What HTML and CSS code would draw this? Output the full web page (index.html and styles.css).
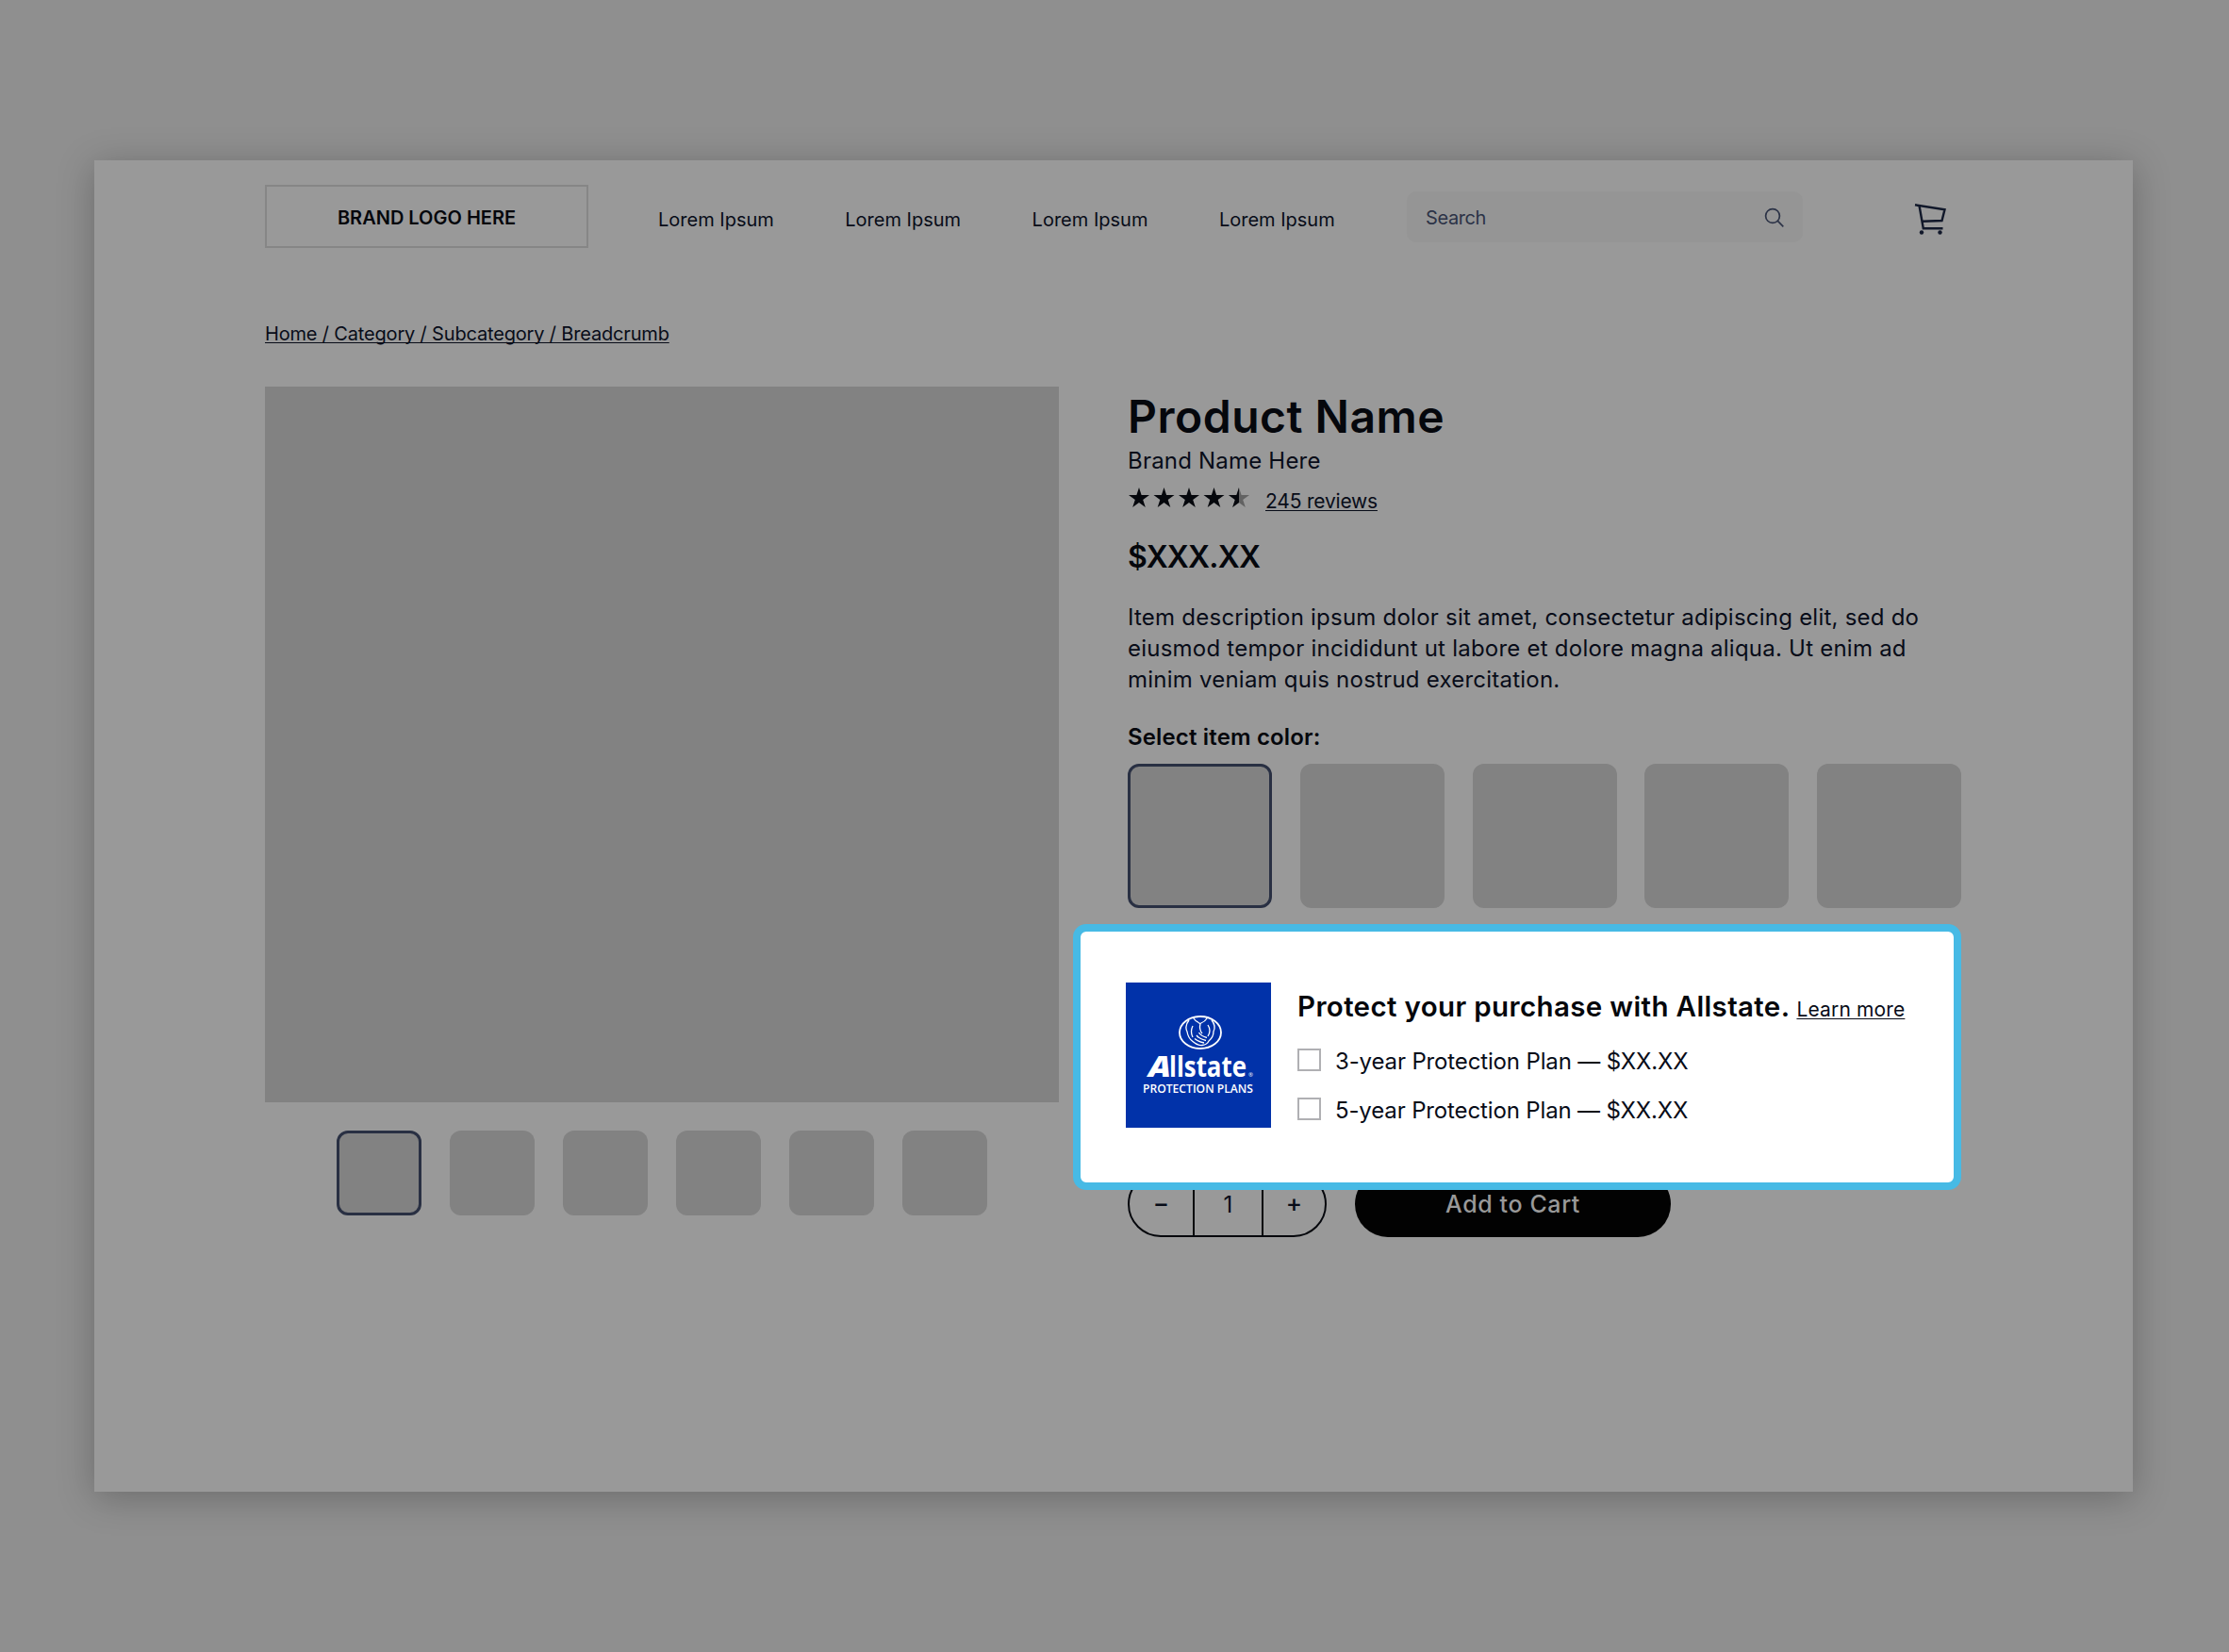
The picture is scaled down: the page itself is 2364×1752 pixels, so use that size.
FILE: index.html
```html
<!DOCTYPE html>
<html lang="en">
<head>
    <meta charset="utf-8">
    <title>Product Name</title>
    <link rel="stylesheet" href="styles.css">
</head>
<body>
    <div class="page">
        <header class="header">
            <div class="logo">BRAND LOGO HERE</div>
            <nav class="nav">
                <a>Lorem Ipsum</a>
                <a>Lorem Ipsum</a>
                <a>Lorem Ipsum</a>
                <a>Lorem Ipsum</a>
            </nav>
            <div class="search">
                <span>Search</span>
                <svg width="22" height="22" viewBox="0 0 22 22" fill="none" stroke="#2c3347" stroke-width="1.7">
                    <circle cx="9" cy="9" r="7.4"/>
                    <path d="M14.2 14.2L20.3 20.3"/>
                </svg>
            </div>
            <svg class="cart" width="36" height="34" viewBox="0 0 36 34" fill="none" stroke="#11182a" stroke-width="2.4">
                <path d="M1 2.3L32.500 7.2L29.500 19L9 19.700"/>
                <path d="M5.500 3L9.800 27.200H30.500"/>
                <circle cx="8" cy="31.500" r="2.200" fill="#11182a" stroke="none"/>
                <circle cx="27.500" cy="31.500" r="2.200" fill="#11182a" stroke="none"/>
            </svg>
        </header>

        <div class="breadcrumb"><a>Home / Category / Subcategory / Breadcrumb</a></div>

        <main class="product">
            <section class="gallery">
                <div class="photo"></div>
                <div class="thumbs">
                    <div class="tile selected"></div>
                    <div class="tile"></div>
                    <div class="tile"></div>
                    <div class="tile"></div>
                    <div class="tile"></div>
                    <div class="tile"></div>
                </div>
            </section>

            <section class="details">
                <h1>Product Name</h1>
                <div class="brand">Brand Name Here</div>
                <div class="rating">
                    <svg width="128" height="22" viewBox="0 0 128 22" fill="#05070c">
                        <defs>
                            <path id="star" d="M11 0L13.6 8H22L15.2 12.9L17.8 21L11 16L4.2 21L6.8 12.9L0 8H8.4Z"/>
                            <clipPath id="half"><rect width="11" height="22"/></clipPath>
                        </defs>
                        <use href="#star"/>
                        <use href="#star" x="26.5"/>
                        <use href="#star" x="53"/>
                        <use href="#star" x="79.5"/>
                        <use href="#star" x="106" fill="#626262"/>
                        <use href="#star" transform="translate(106 0)" clip-path="url(#half)"/>
                    </svg>
                    <a>245 reviews</a>
                </div>
                <div class="price">$XXX.XX</div>
                <p class="description">Item description ipsum dolor sit amet, consectetur adipiscing elit, sed do<br>
                eiusmod tempor incididunt ut labore et dolore magna aliqua. Ut enim ad<br>
                minim veniam quis nostrud exercitation.</p>
                <div class="label">Select item color:</div>
                <div class="swatches">
                    <div class="tile selected"></div>
                    <div class="tile"></div>
                    <div class="tile"></div>
                    <div class="tile"></div>
                    <div class="tile"></div>
                </div>
                <div class="actions">
                    <div class="quantity">
                        <span class="step">−</span>
                        <span>1</span>
                        <span class="step">+</span>
                    </div>
                    <div class="add">Add to Cart</div>
                </div>
            </section>
        </main>

        <!-- protection plan offer, sits over the dimmed page -->
        <aside class="offer">
            <svg class="allstate" width="154" height="154" viewBox="0 0 154 154" fill="#fff">
                <rect width="154" height="154" fill="#0132a9"/>
                <g fill="none" stroke="#fff" stroke-width="1.3">
                    <ellipse cx="79" cy="53" rx="22" ry="17" stroke-width="1.8"/>
                    <path d="M71.500 37.500Q74 41.500 79 43.500Q84 41.500 86.500 37.500"/>
                    <path d="M79 43.500Q77.500 50 81 54"/>
                    <path d="M67 40Q62 46 65 52Q66 59 71 62.500Q76 67 81 66.500"/>
                    <path d="M91 40Q96 46 93 52Q93 58 88 62Q86 66 81 66.500"/>
                    <path d="M71 46Q68 52 71 58"/>
                    <path d="M87 45Q91 51 87 57"/>
                    <path d="M77.500 53Q80 57 86 58.500M75 56Q78 60 85 61.500M73 59.500Q77 63 83 64"/>
                </g>
                <text class="wordmark slanted" x="24" y="99.500" textLength="24" lengthAdjust="spacingAndGlyphs">A</text>
                <text class="wordmark" x="46" y="99.500" textLength="82" lengthAdjust="spacingAndGlyphs">llstate</text>
                <text class="reg" x="130" y="99.500">®</text>
                <text class="plans" x="18" y="117.300" textLength="117" lengthAdjust="spacingAndGlyphs">PROTECTION PLANS</text>
            </svg>
            <div class="offer-body">
                <div class="offer-title"><strong>Protect your purchase with Allstate.</strong><a>Learn more</a></div>
                <div class="plan"><i class="box"></i><span>3-year Protection Plan — $XX.XX</span></div>
                <div class="plan"><i class="box"></i><span>5-year Protection Plan — $XX.XX</span></div>
            </div>
        </aside>
    </div>
</body>
</html>
```
FILE: styles.css
```css
html, body {
    margin: 0;
    padding: 0;
}

body {
    width: 2364px;
    height: 1752px;
    overflow: hidden;
    background: #8f8f8f;
    font-family: Inter, "Liberation Sans", sans-serif;
    font-size: 24px;
    color: #080c18;
}

.page {
    position: relative;
    box-sizing: border-box;
    width: 2162px;
    height: 1412px;
    margin: 170px 0 0 100px;
    padding: 26px 182px 0 181px;
    background: #999;
    box-shadow: 0 6px 36px rgba(0, 0, 0, 0.25);
}

.header {
    display: flex;
    align-items: center;
    height: 67px;
}

.logo {
    box-sizing: border-box;
    width: 343px;
    height: 67px;
    padding-top: 2px;
    border: 2px solid #868686;
    font-size: 20px;
    font-weight: 600;
    line-height: 62px;
    text-align: center;
    color: #05070c;
}

.nav {
    display: flex;
    width: 794px;
    margin-left: 74px;
    padding-top: 6px;
    font-size: 20px;
}

.nav a {
    width: 198.300px;
    white-space: nowrap;
}

.search {
    box-sizing: border-box;
    display: flex;
    align-items: center;
    justify-content: space-between;
    width: 420px;
    height: 54px;
    padding: 3px 19px 0 20px;
    border-radius: 10px;
    background: #959595;
    font-size: 20px;
    letter-spacing: -0.4px;
    color: #2c3347;
}

.cart {
    margin-left: 118px;
    padding-top: 4px;
}

.breadcrumb {
    margin-top: 76px;
    height: 71px;
    font-size: 20px;
    letter-spacing: -0.17px;
    line-height: 31px;
}

.breadcrumb a,
.rating a,
.offer-title a {
    text-decoration: underline;
    text-decoration-thickness: 1px;
    text-underline-offset: 2px;
    text-decoration-skip-ink: none;
}

.product {
    display: flex;
    gap: 73px;
}

.gallery {
    width: 842px;
}

.photo {
    height: 759px;
    background: #828282;
}

.thumbs {
    display: flex;
    justify-content: center;
    gap: 30.200px;
    margin-top: 30px;
}

.tile {
    box-sizing: border-box;
    border-radius: 12px;
    background: #828282;
}

.tile.selected {
    border: 3px solid #293043;
}

.thumbs .tile {
    width: 90px;
    height: 90px;
}

.details {
    width: 884px;
}

h1 {
    margin: 0;
    font-size: 48px;
    font-weight: 600;
    letter-spacing: 0.5px;
    line-height: 63px;
    color: #05070c;
}

.brand {
    letter-spacing: 0.2px;
    line-height: 32px;
}

.rating {
    display: flex;
    align-items: center;
    gap: 17px;
    height: 46px;
    padding-left: 1px;
}

.rating a {
    padding-top: 7px;
    font-size: 21px;
    letter-spacing: -0.2px;
}

.price {
    margin-top: 18px;
    font-size: 32px;
    font-weight: 600;
    letter-spacing: -0.8px;
    line-height: 43px;
    color: #05070c;
}

.description {
    margin: 26px 0 30px;
    letter-spacing: 0.230px;
    line-height: 33px;
    white-space: nowrap;
}

.label {
    font-weight: 600;
    letter-spacing: 0.15px;
    line-height: 30px;
    color: #05070c;
}

.swatches {
    display: flex;
    justify-content: space-between;
    margin-top: 13px;
}

.swatches .tile {
    width: 153px;
    height: 153px;
}

.actions {
    display: flex;
    gap: 30px;
    margin-top: 279px;
    text-align: center;
}

.quantity {
    box-sizing: border-box;
    display: grid;
    grid-template-columns: 67px 73px 67px;
    width: 211px;
    height: 70px;
    border: 2px solid #05070c;
    border-radius: 35px;
    line-height: 67px;
}

.quantity span {
    height: 66px;
}

.quantity span + span {
    border-left: 2px solid #05070c;
}

.quantity .step {
    font-size: 26px;
    font-weight: 500;
    line-height: 64px;
}

.add {
    width: 335px;
    height: 70px;
    border-radius: 35px;
    background: #020202;
    font-size: 25px;
    font-weight: 500;
    letter-spacing: 0.6px;
    line-height: 70px;
    color: #999;
}

.offer {
    position: absolute;
    left: 1038px;
    top: 810px;
    box-sizing: border-box;
    display: flex;
    gap: 28px;
    width: 942px;
    height: 282px;
    padding: 54px 48px;
    border: 8px solid #47bae5;
    border-radius: 14px;
    background: #fff;
    white-space: nowrap;
}

.wordmark {
    font: bold 30px "Open Sans", sans-serif;
}

.slanted {
    font-style: italic;
    font-weight: 800;
}

.reg {
    font: 6px "Open Sans", sans-serif;
}

.plans {
    font: 600 13px "Open Sans", sans-serif;
}

.offer-body {
    padding-top: 5px;
}

.offer-title {
    display: flex;
    align-items: baseline;
    gap: 7px;
    height: 52px;
    line-height: 41px;
}

.offer-title strong {
    font-size: 29.500px;
    font-weight: 600;
    letter-spacing: 0.36px;
    color: #05070c;
}

.offer-title a {
    font-size: 21px;
    letter-spacing: 0.15px;
}

.plan {
    display: flex;
    align-items: center;
    gap: 15px;
    height: 52px;
    letter-spacing: -0.14px;
}

.box {
    box-sizing: border-box;
    width: 25px;
    height: 24px;
    margin-bottom: 2px;
    border: 2px solid #b0b0b3;
}
```
